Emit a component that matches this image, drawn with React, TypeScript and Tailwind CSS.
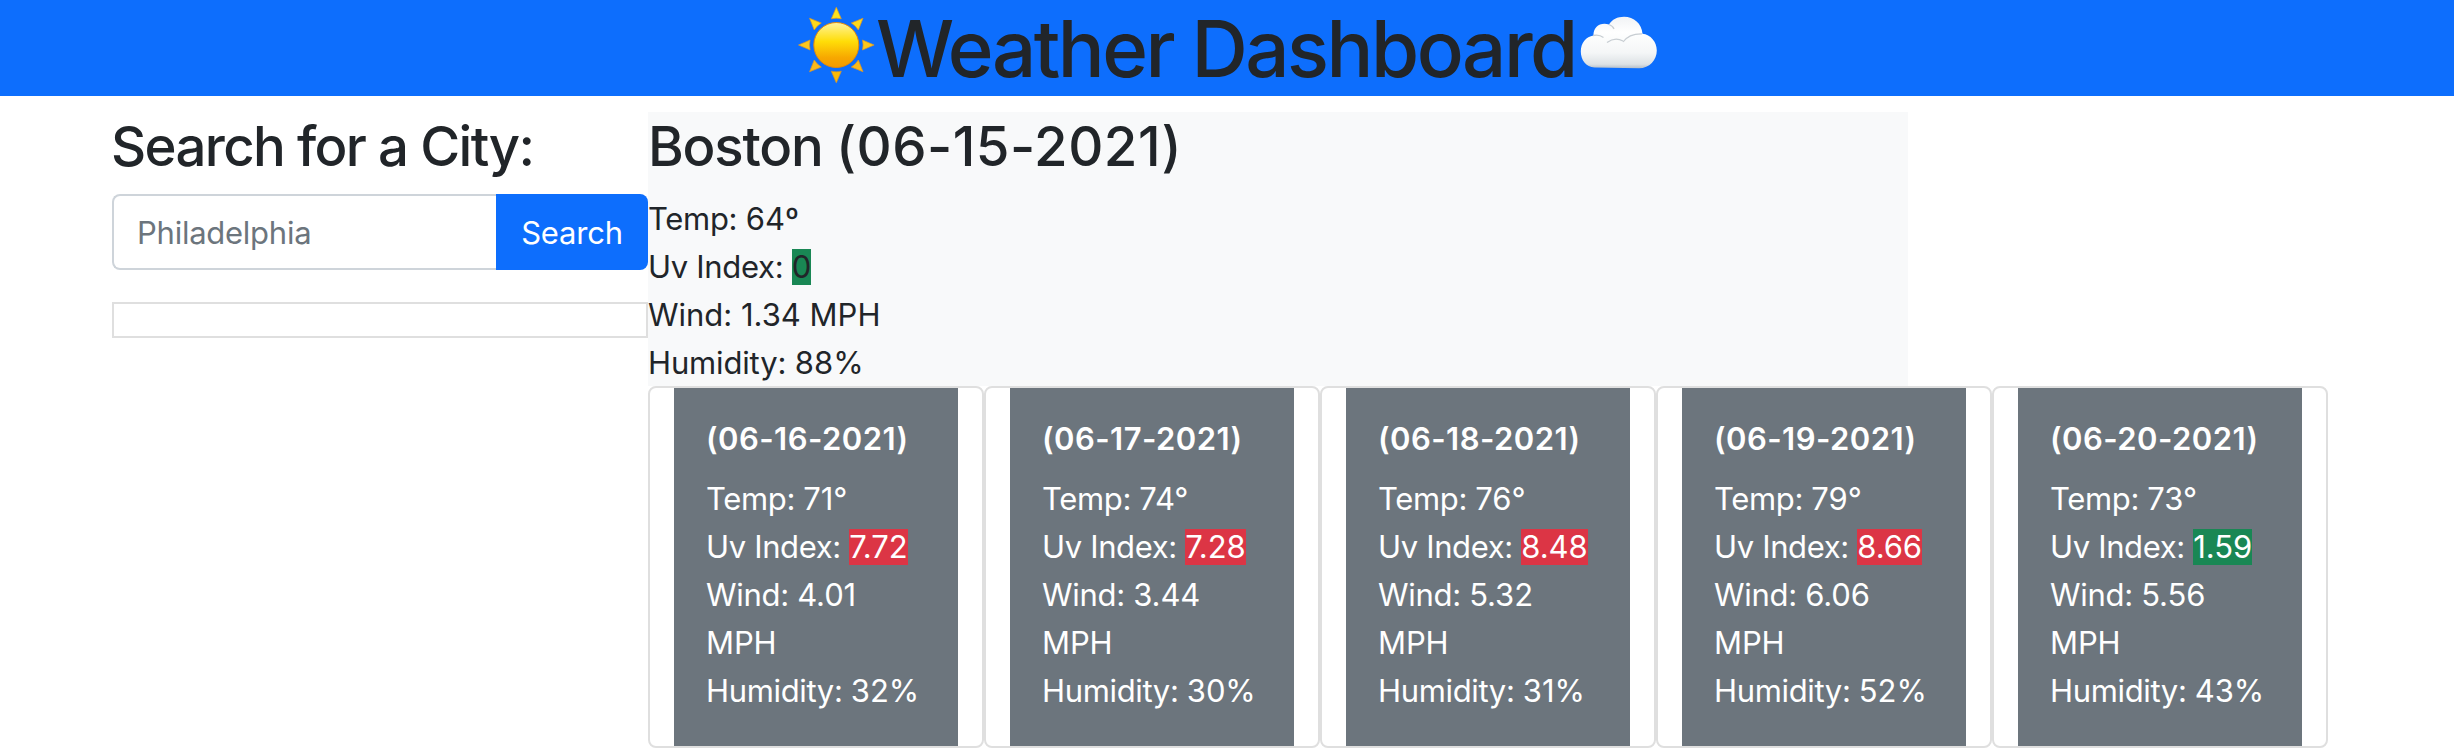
import React from "react";

type Day = { date: string; temp: number; uv: string; wind: string; humidity: number; high: boolean };

const days: Day[] = [
  { date: "06-16-2021", temp: 71, uv: "7.72", wind: "4.01", humidity: 32, high: true },
  { date: "06-17-2021", temp: 74, uv: "7.28", wind: "3.44", humidity: 30, high: true },
  { date: "06-18-2021", temp: 76, uv: "8.48", wind: "5.32", humidity: 31, high: true },
  { date: "06-19-2021", temp: 79, uv: "8.66", wind: "6.06", humidity: 52, high: true },
  { date: "06-20-2021", temp: 73, uv: "1.59", wind: "5.56", humidity: 43, high: false },
];

const rays = [
  { angle: 0, fill: "#ffe21c" },
  { angle: 45, fill: "#ffd91a" },
  { angle: 90, fill: "#fdc71c" },
  { angle: 135, fill: "#fbb91a" },
  { angle: 180, fill: "#fcba08" },
  { angle: 225, fill: "#fbb91a" },
  { angle: 270, fill: "#fdc71c" },
  { angle: 315, fill: "#ffd91a" },
];

function Sun() {
  return (
    <svg width="80" height="96" viewBox="0 0 80 96" className="shrink-0">
      <defs>
        <linearGradient id="disc" x1="0" y1="0" x2="0" y2="1">
          <stop offset="0" stopColor="#fff3a0" />
          <stop offset="0.22" stopColor="#ffe84d" />
          <stop offset="0.42" stopColor="#ffdd08" />
          <stop offset="0.78" stopColor="#f7a800" />
          <stop offset="1" stopColor="#f39a00" />
        </linearGradient>
      </defs>
      <g stroke="#d9952a" strokeWidth="0.7">
        {rays.map((r) => (
          <path
            key={r.angle}
            d="M40.3 7.2 L45.300 18.8 Q40.300 17.6 35.300 18.8 Z"
            fill={r.fill}
            transform={`rotate(${r.angle} 40.3 45)`}
          />
        ))}
      </g>
      <circle cx="40.3" cy="45" r="22.5" fill="url(#disc)" stroke="#e58a08" strokeWidth="1" />
    </svg>
  );
}

function Cloud() {
  return (
    <svg width="80" height="96" viewBox="0 0 80 96" className="shrink-0">
      <defs>
        <linearGradient id="cloud" x1="0" y1="0" x2="0" y2="1">
          <stop offset="0" stopColor="#f1f3f5" />
          <stop offset="0.3" stopColor="#ffffff" />
          <stop offset="0.7" stopColor="#f4f6f7" />
          <stop offset="0.92" stopColor="#dde2e5" />
          <stop offset="1" stopColor="#b4bec8" />
        </linearGradient>
        <filter id="soft" x="-20%" y="-20%" width="140%" height="140%">
          <feGaussianBlur stdDeviation="0.7" />
        </filter>
      </defs>
      <path
        d="M16.500 67.500 C8 67 2.800 60 2.800 51.500 C2.800 43 8 36.500 15.500 35.500 C15 28.500 20 23.800 26.500 23.800 C28 23.800 29.500 24 31 24.500 C34 19.500 39.500 16.800 46 16.800 C56 16.800 63.500 23.500 64.500 33.800 C72.500 34.500 78.800 42 78.800 50.500 C78.800 60 71.500 68.300 61 68.300 Z"
        fill="url(#cloud)"
      />
      <g fill="none" stroke="#c8ced3" strokeWidth="1.3" filter="url(#soft)">
        <path d="M15 35.500 Q21 34 25.500 37.500" />
        <path d="M31 24.500 Q35 26 36 29" />
        <path d="M29 42.500 Q37 36.500 45 41" />
        <path d="M45 42 Q51 33.500 64 33.800" />
      </g>
    </svg>
  );
}

function Uv({ value, tone }: { value: string; tone: string }) {
  return <span className={`inline-block h-9 leading-9 ${tone}`}>{value}</span>;
}

export default function App() {
  return (
    <div className="h-[748px] w-full overflow-hidden bg-white font-['Inter',sans-serif] text-[31px] leading-[48px] text-[#212529]">
      <header className="flex h-24 items-center justify-center bg-[#0d6efd]">
        <Sun />
        <h1 className="w-[702px] pt-0.5 text-left text-[78px] leading-[94px] font-medium tracking-[-2.500px] whitespace-nowrap">
          Weather Dashboard
        </h1>
        <Cloud />
      </header>

      <main className="flex pt-4 pl-28">
        <aside className="w-[536px] shrink-0">
          <h3 className="-ml-px mb-4 h-[66px] pt-px text-[54.500px] leading-[66px] font-medium tracking-[-1.650px] whitespace-nowrap">
            Search for a City:
          </h3>
          <div className="flex h-[76px]">
            <input
              placeholder="Philadelphia"
              className="w-[384px] rounded-l-lg border-2 border-r-0 border-[#ced4da] pt-0.5 pl-[23px] tracking-[-0.25px] outline-none placeholder:text-[#6c757d]"
            />
            <button className="flex-1 rounded-r-lg bg-[#0d6efd] pt-0.5 font-[430] tracking-[-0.200px] text-white">
              Search
            </button>
          </div>
          <div className="mt-8 h-9 border-2 border-[#dfdfdf]" />
        </aside>

        <div className="w-[1680px] shrink-0">
          <section className="h-[274px] w-[1260px] bg-[#f8f9fa]">
            <h3 className="mb-[17px] h-[66px] pt-px text-[54.500px] leading-[66px] font-medium whitespace-nowrap">
              <span className="tracking-[-1.200px]">Boston </span>
              <span className="tracking-[0.500px]">(06-15-2021)</span>
            </h3>
            <p>
              <span className="tracking-[-0.300px]">Temp: </span>64º
            </p>
            <p>
              <span className="tracking-[-0.300px]">Uv Index: </span>
              <Uv value="0" tone="bg-[#198754]" />
            </p>
            <p>Wind: 1.34 MPH</p>
            <p>
              <span className="tracking-[-0.150px]">Humidity: </span>88%
            </p>
          </section>

          <section className="flex">
            {days.map((d) => (
              <article key={d.date} className="h-[362px] w-[336px] rounded-lg border-2 border-[#dfdfdf] px-6">
                <div className="h-full bg-[#6c757d] px-8 pt-8 font-[430] tracking-[-0.100px] whitespace-nowrap text-white">
                  <h6 className="mb-[17px] h-[38px] leading-[38px] font-semibold tracking-[0.450px]">({d.date})</h6>
                  <p>
                    <span className="tracking-[-0.350px]">Temp: </span>
                    {d.temp}°
                  </p>
                  <p>
                    <span className="tracking-[-0.350px]">Uv Index: </span>
                    <Uv value={d.uv} tone={d.high ? "bg-[#dc3545]" : "bg-[#198754]"} />
                  </p>
                  <p>
                    <span className="tracking-[-0.300px]">Wind: </span>
                    {d.wind}
                    <br />
                    MPH
                  </p>
                  <p>
                    <span className="tracking-[-0.350px]">Humidity: </span>
                    {d.humidity}%
                  </p>
                </div>
              </article>
            ))}
          </section>
        </div>
      </main>
    </div>
  );
}
